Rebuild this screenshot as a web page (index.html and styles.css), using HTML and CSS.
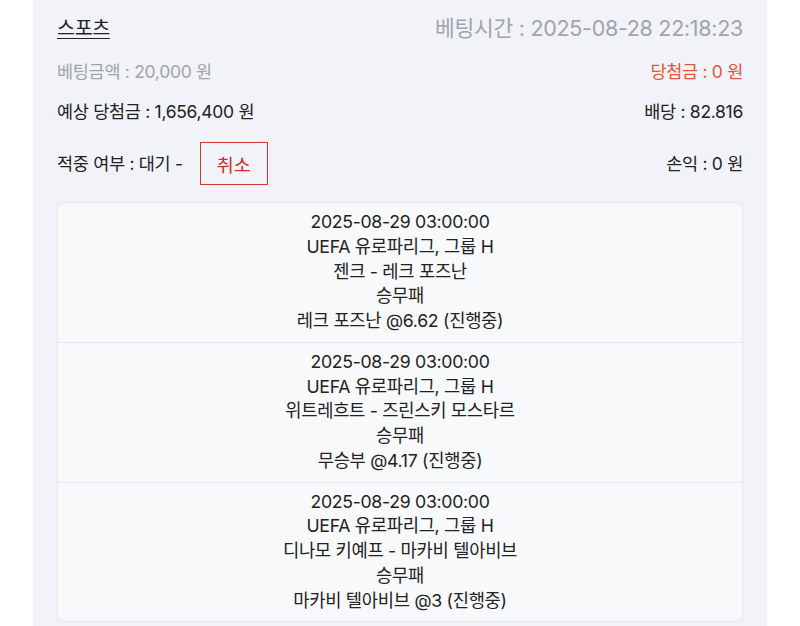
FILE: index.html
```html
<!DOCTYPE html>
<html>
<head>
	<title>베팅내역</title>
	<meta charset="utf-8">
	<meta name="viewport" content="width=device-width, initial-scale=1">
	<link rel="stylesheet" href="styles.css">
</head>
<body>

	<div class="bet-panel">

		<div class="bet-row bet-head">
			<span class="bet-type">스포츠</span>
			<span class="text-muted">베팅시간 : 2025-08-28 22:18:23</span>
		</div>

		<div class="bet-row bet-row-2">
			<span class="text-muted">베팅금액 : 20,000 원</span>
			<span class="text-red">당첨금 : 0 원</span>
		</div>

		<div class="bet-row bet-row-3">
			<span>예상 당첨금 : 1,656,400 원</span>
			<span>배당 : 82.816</span>
		</div>

		<div class="bet-row bet-row-4">
			<span class="bet-status">
				적중 여부 : 대기 -
				<button class="btn-cancel">취소</button>
			</span>
			<span>손익 : 0 원</span>
		</div>

		<div class="bet-games">
			<div class="bet-game">
				<div>2025-08-29 03:00:00</div>
				<div>UEFA 유로파리그, 그룹 H</div>
				<div>젠크 - 레크 포즈난</div>
				<div>승무패</div>
				<div>레크 포즈난 @6.62 (진행중)</div>
			</div>
			<div class="bet-game">
				<div>2025-08-29 03:00:00</div>
				<div>UEFA 유로파리그, 그룹 H</div>
				<div>위트레흐트 - 즈린스키 모스타르</div>
				<div>승무패</div>
				<div>무승부 @4.17 (진행중)</div>
			</div>
			<div class="bet-game">
				<div>2025-08-29 03:00:00</div>
				<div>UEFA 유로파리그, 그룹 H</div>
				<div>디나모 키예프 - 마카비 텔아비브</div>
				<div>승무패</div>
				<div>마카비 텔아비브 @3 (진행중)</div>
			</div>
		</div>

	</div>

</body>
</html>
```

FILE: styles.css
```css
*,
*:before,
*:after {
	box-sizing: border-box;
}

body {
	margin: 0;
	background-color: #ffffff;
	color: #222222;
	font-family: "Inter", "Noto Sans CJK KR", sans-serif;
	font-size: 17.5px;
}

.bet-panel {
	margin: 0 33px;
	padding: 16px 24px 30px;
	background-color: #f1f3f8;
	min-height: 640px;
}

.bet-row {
	display: flex;
	justify-content: space-between;
	align-items: center;
	line-height: 24px;
	letter-spacing: -0.3px;
}

.bet-head .bet-type {
	font-size: 19.5px;
}

.bet-head .text-muted {
	font-size: 21.5px;
}

.bet-type {
	text-decoration: underline;
	text-underline-offset: 3px;
}

.bet-row-2 {
	margin-top: 20px;
}

.bet-row-3 {
	margin-top: 16px;
}

.bet-row-4 {
	margin-top: 18px;
}

.text-muted {
	color: #a0a4ab;
}

.text-red {
	color: #e4553f;
}

.bet-status {
	display: flex;
	align-items: center;
}

.btn-cancel {
	margin-left: 17px;
	width: 68px;
	height: 43px;
	padding: 0;
	background: transparent;
	border: 1px solid #d23a3a;
	border-radius: 0;
	color: #cf2e2e;
	font-family: inherit;
	font-size: 18.5px;
}

.bet-games {
	margin-top: 17px;
	background-color: #f8f9fb;
	border: 1px solid #e2e5eb;
	border-radius: 8px;
	overflow: hidden;
}

.bet-game {
	padding: 7px 0 8px;
	text-align: center;
	font-size: 17.7px;
	line-height: 24.75px;
	letter-spacing: -0.3px;
}

.bet-game + .bet-game {
	border-top: 1px solid #e4e7ec;
}
```
